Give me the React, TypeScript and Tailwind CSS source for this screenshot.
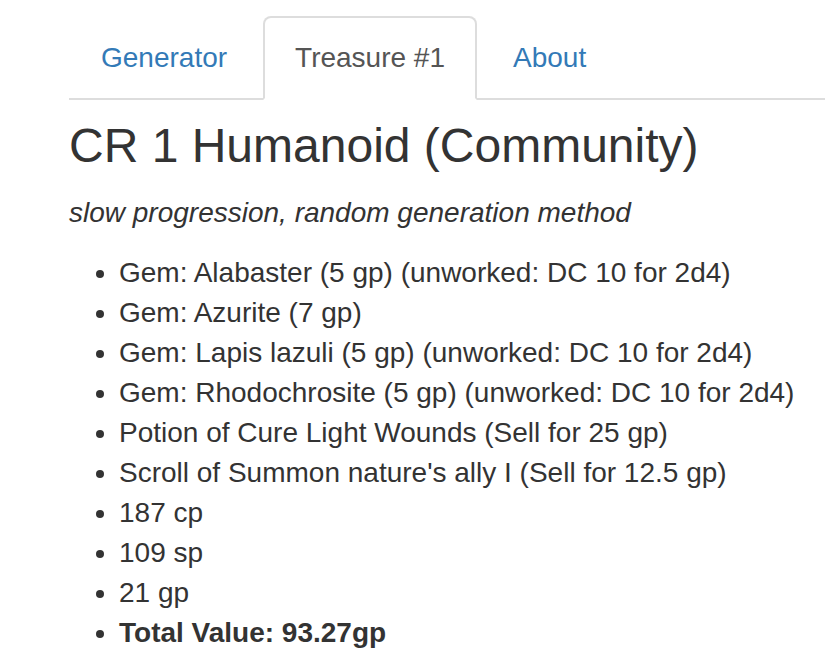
import React from "react";

const items = [
  "Gem: Alabaster (5 gp) (unworked: DC 10 for 2d4)",
  "Gem: Azurite (7 gp)",
  "Gem: Lapis lazuli (5 gp) (unworked: DC 10 for 2d4)",
  "Gem: Rhodochrosite (5 gp) (unworked: DC 10 for 2d4)",
  "Potion of Cure Light Wounds (Sell for 25 gp)",
  "Scroll of Summon nature's ally I (Sell for 12.5 gp)",
  "187 cp",
  "109 sp",
  "21 gp",
];

export default function App() {
  return (
    <div
      className="min-h-[657px] w-full bg-white pl-[69px] pt-[16px] text-[#333] text-[28px] leading-[40px]"
      style={{ fontFamily: '"Liberation Sans", Arial, Helvetica, sans-serif' }}
    >
      <ul className="flex border-b-2 border-[#ddd]">
        <li className="-mb-[2px] mr-[4px]">
          <a className="block rounded-t-[8px] border-2 border-transparent px-[30px] py-[20px] text-[#337ab7]">
            Generator
          </a>
        </li>
        <li className="-mb-[2px] mr-[4px]">
          <a className="block rounded-t-[8px] border-2 border-[#ddd] border-b-transparent bg-white px-[30px] py-[20px] text-[#555]">
            Treasure #1
          </a>
        </li>
        <li className="-mb-[2px] mr-[4px]">
          <a className="block rounded-t-[8px] border-2 border-transparent px-[30px] py-[20px] text-[#337ab7]">
            About
          </a>
        </li>
      </ul>
      <h3 className="mt-[20px] mb-[20px] text-[48px] leading-[52.8px] font-normal">
        CR 1 Humanoid (Community)
      </h3>
      <p className="mb-[20px] italic">slow progression, random generation method</p>
      <ul className="list-disc pl-[50px]">
        {items.map((t) => (
          <li key={t}>{t}</li>
        ))}
        <li>
          <b className="font-bold">Total Value: 93.27gp</b>
        </li>
      </ul>
    </div>
  );
}
